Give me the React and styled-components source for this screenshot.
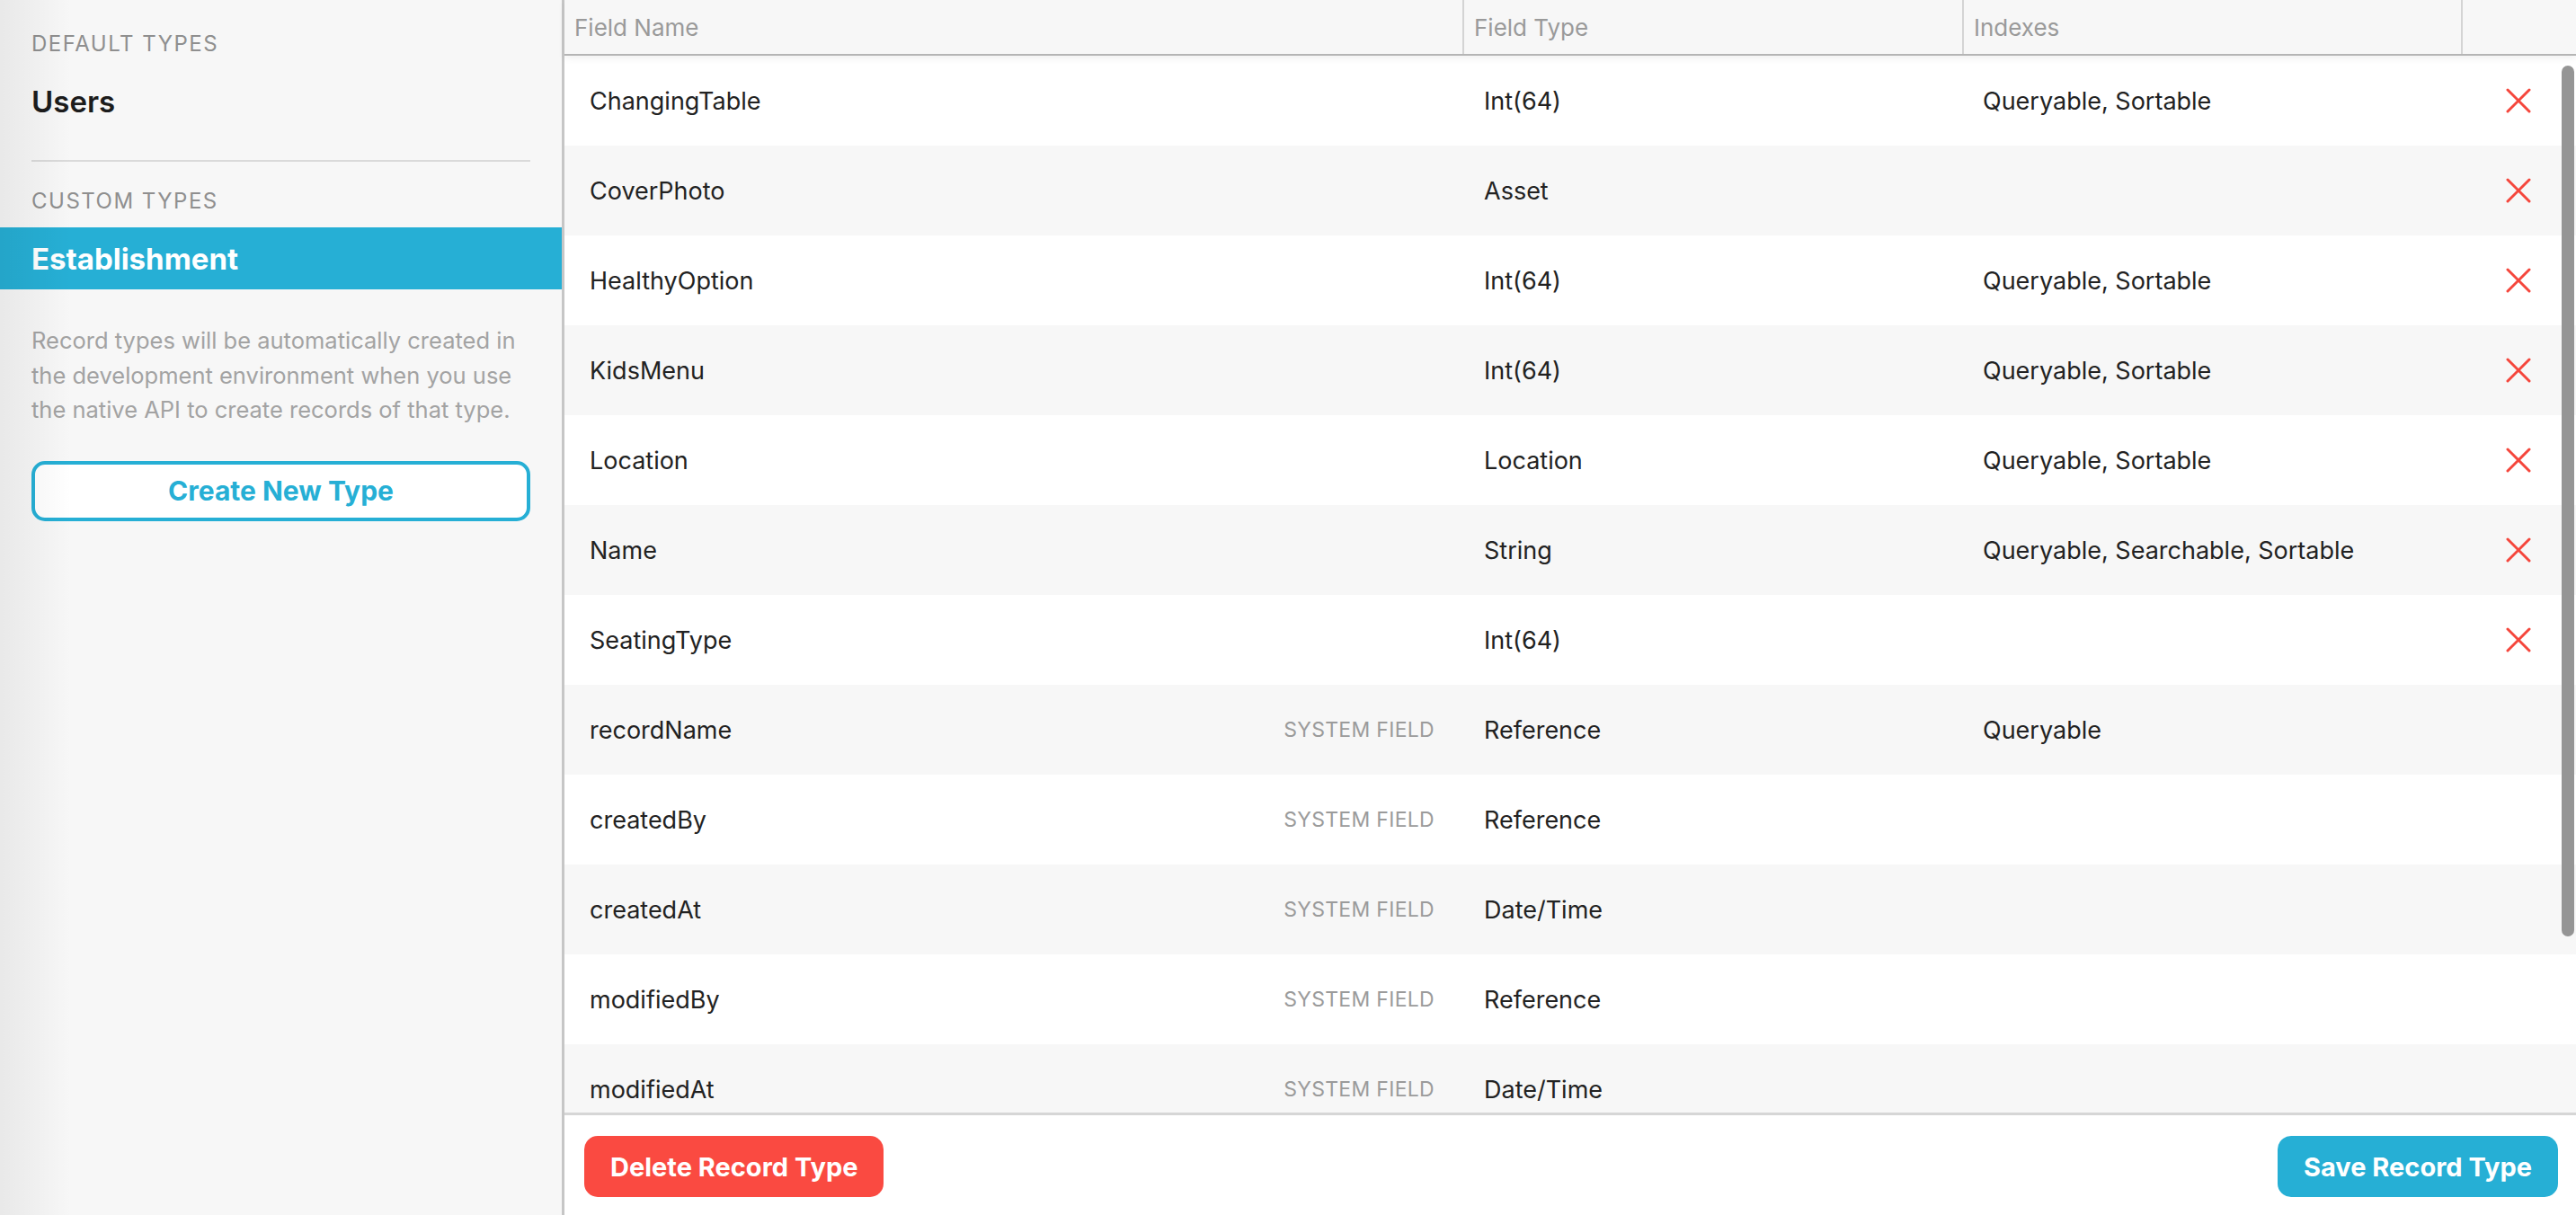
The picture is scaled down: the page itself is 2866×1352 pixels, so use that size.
import React from 'react';
import styled, { createGlobalStyle } from 'styled-components';

const GlobalStyle = createGlobalStyle`
  html, body {
    margin: 0;
    padding: 0;
    height: 100%;
    overflow: hidden;
    font-family: Inter, "Noto Sans", "Liberation Sans", sans-serif;
    -webkit-font-smoothing: antialiased;
  }
  #root {
    height: 100%;
  }
`;

const Page = styled.div`
  display: flex;
  width: 100vw;
  height: 100vh;
  background: #fff;
`;

const Sidebar = styled.aside`
  position: relative;
  width: 625px;
  flex-shrink: 0;
  background: #f7f7f7;
  border-right: 3px solid #c6c6c6;
  padding-top: 33px;
  box-sizing: content-box;

  &::before {
    content: '';
    position: absolute;
    top: 0;
    left: 0;
    bottom: 0;
    width: 80px;
    background: linear-gradient(90deg, rgba(0, 0, 0, 0.06), rgba(0, 0, 0, 0));
    pointer-events: none;
    z-index: 1;
  }
`;

const SectionLabel = styled.div`
  padding: 0 35px;
  font-size: 24px;
  line-height: 32px;
  letter-spacing: 1.5px;
  text-transform: uppercase;
  color: #8f8f8f;
  margin-bottom: ${p => p.gap || 0}px;
`;

const TypeItem = styled.div`
  height: 69px;
  display: flex;
  align-items: center;
  padding: 0 35px;
  font-size: 33px;
  font-weight: ${p => (p.active ? 700 : 600)};
  color: ${p => (p.active ? '#fff' : '#1c1c1c')};
  background: ${p => (p.active ? '#26afd5' : 'transparent')};
`;

const Divider = styled.hr`
  border: 0;
  height: 2px;
  background: #dadada;
  margin: 31px 35px 28px;
`;

const Hint = styled.p`
  margin: 38px 35px 37px;
  font-size: 25.5px;
  line-height: 38.5px;
  color: #a3a3a3;
`;

const OutlineButton = styled.button`
  display: block;
  width: calc(100% - 70px);
  margin: 0 35px;
  height: 67px;
  box-sizing: border-box;
  border: 4px solid #26afd5;
  border-radius: 15px;
  background: #fff;
  color: #26afd5;
  font-family: inherit;
  font-size: 30px;
  font-weight: 700;
`;

const Main = styled.main`
  flex: 1;
  display: flex;
  flex-direction: column;
  min-width: 0;
`;

const HeaderRow = styled.div`
  position: relative;
  z-index: 2;
  display: grid;
  grid-template-columns: 999px 556px 555px 1fr;
  height: 60px;
  background: #f7f7f7;
  border-bottom: 2px solid #b5b5b5;
  box-shadow: 0 3px 8px rgba(0, 0, 0, 0.06);
`;

const HeadCell = styled.div`
  display: flex;
  align-items: center;
  padding-left: ${p => p.pad || 11}px;
  font-size: 26px;
  color: #9a9a9a;
  border-left: ${p => (p.first ? 'none' : '2px solid #d4d4d4')};
  box-sizing: border-box;
`;

const Body = styled.div`
  position: relative;
  flex: 1;
  overflow: hidden;
`;

const Row = styled.div`
  display: grid;
  grid-template-columns: 999px 556px 555px 1fr;
  height: 100px;
  background: ${p => (p.odd ? '#f7f7f7' : '#fff')};
  font-size: 27px;
  color: #222;
`;

const Cell = styled.div`
  display: flex;
  align-items: center;
  padding-left: ${p => p.pad || 0}px;
  padding-right: ${p => p.padRight || 0}px;
  justify-content: ${p => p.justify || 'flex-start'};
`;

const SystemTag = styled.span`
  font-size: 23px;
  color: #9b9b9b;
  text-transform: uppercase;
  letter-spacing: 0.3px;
`;

const Scrollbar = styled.div`
  position: absolute;
  top: 11px;
  right: 2px;
  width: 14px;
  height: 969px;
  border-radius: 7px;
  background: #959595;
`;

const Footer = styled.footer`
  height: 114px;
  flex-shrink: 0;
  border-top: 3px solid #d6d6d6;
  display: flex;
  justify-content: space-between;
  align-items: flex-start;
  padding: 23px 20px 0 22px;
  box-sizing: border-box;
  background: #fff;
`;

const SolidButton = styled.button`
  height: 68px;
  padding: 0 29px;
  border: 0;
  border-radius: 15px;
  background: ${p => p.color};
  color: #fff;
  font-family: inherit;
  font-size: 29px;
  font-weight: 700;
`;

const RemoveIcon = () => (
  <svg width="28" height="28" viewBox="0 0 28 28">
    <path d="M2 2 L26 26 M26 2 L2 26" stroke="#f5463c" strokeWidth="3" strokeLinecap="round" fill="none" />
  </svg>
);

const fields = [
  { name: 'ChangingTable', type: 'Int(64)', indexes: 'Queryable, Sortable' },
  { name: 'CoverPhoto', type: 'Asset', indexes: '' },
  { name: 'HealthyOption', type: 'Int(64)', indexes: 'Queryable, Sortable' },
  { name: 'KidsMenu', type: 'Int(64)', indexes: 'Queryable, Sortable' },
  { name: 'Location', type: 'Location', indexes: 'Queryable, Sortable' },
  { name: 'Name', type: 'String', indexes: 'Queryable, Searchable, Sortable' },
  { name: 'SeatingType', type: 'Int(64)', indexes: '' },
  { name: 'recordName', type: 'Reference', indexes: 'Queryable', system: true },
  { name: 'createdBy', type: 'Reference', indexes: '', system: true },
  { name: 'createdAt', type: 'Date/Time', indexes: '', system: true },
  { name: 'modifiedBy', type: 'Reference', indexes: '', system: true },
  { name: 'modifiedAt', type: 'Date/Time', indexes: '', system: true }
];

const App = () => {
  return (
    <Page>
      <GlobalStyle />
      <Sidebar>
        <SectionLabel gap={13}>Default Types</SectionLabel>
        <TypeItem>Users</TypeItem>
        <Divider />
        <SectionLabel gap={13}>Custom Types</SectionLabel>
        <TypeItem active>Establishment</TypeItem>
        <Hint>
          Record types will be automatically created in the development environment when you use
          the native API to create records of that type.
        </Hint>
        <OutlineButton>Create New Type</OutlineButton>
      </Sidebar>
      <Main>
        <HeaderRow>
          <HeadCell first>Field Name</HeadCell>
          <HeadCell>Field Type</HeadCell>
          <HeadCell>Indexes</HeadCell>
          <HeadCell />
        </HeaderRow>
        <Body>
          {fields.map((field, index) => (
            <Row key={field.name} odd={index % 2 === 1}>
              <Cell pad={28} padRight={31} justify="space-between">
                <span>{field.name}</span>
                {field.system && <SystemTag>System Field</SystemTag>}
              </Cell>
              <Cell pad={24}>{field.type}</Cell>
              <Cell pad={23}>{field.indexes}</Cell>
              <Cell justify="center">{!field.system && <RemoveIcon />}</Cell>
            </Row>
          ))}
          <Scrollbar />
        </Body>
        <Footer>
          <SolidButton color="#fa4a41">Delete Record Type</SolidButton>
          <SolidButton color="#26afd5">Save Record Type</SolidButton>
        </Footer>
      </Main>
    </Page>
  );
};

export default App;
